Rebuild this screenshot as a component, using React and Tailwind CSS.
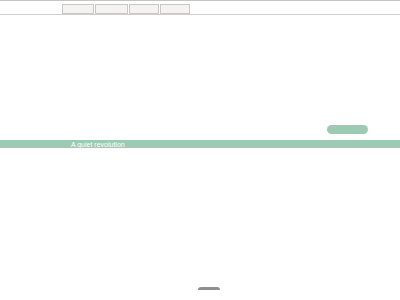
export default function App() {
  return (
    <div className="w-[400px] h-[300px] bg-white overflow-hidden flex flex-col" style={{ fontFamily: '"Liberation Sans", Arial, sans-serif' }}>
      <div className="h-[1px] bg-[#c4c4c4]" />
      <div className="h-[13px] flex items-start pt-[3px] pl-[62px] gap-[1px]">
        <div className="w-[32px] h-[10px] border border-[#cdc6c1] bg-[#f3f3f3]" />
        <div className="w-[33px] h-[10px] border border-[#cdc6c1] bg-[#f3f3f3]" />
        <div className="w-[30px] h-[10px] border border-[#cdc6c1] bg-[#f3f3f3]" />
        <div className="w-[30px] h-[10px] border border-[#cdc6c1] bg-[#f3f3f3]" />
      </div>
      <div className="h-[1px] bg-[#cfcfcf]" />
      <div className="h-[125px] flex items-end justify-end pr-[32px] pb-[6px]">
        <div className="w-[41px] h-[9px] rounded-full bg-[#9ecab4]" />
      </div>
      <div className="h-[8px] bg-[#9ecab4] flex items-center pl-[71px]">
        <span className="text-[7px] leading-none text-white">A quiet revolution</span>
      </div>
      <div className="flex-1 flex items-end justify-center pl-[18px] pb-[10px]">
        <div className="w-[22px] h-[3px] rounded-t-full bg-[#8f8f8f] blur-[0.5px]" />
      </div>
    </div>
  );
}
